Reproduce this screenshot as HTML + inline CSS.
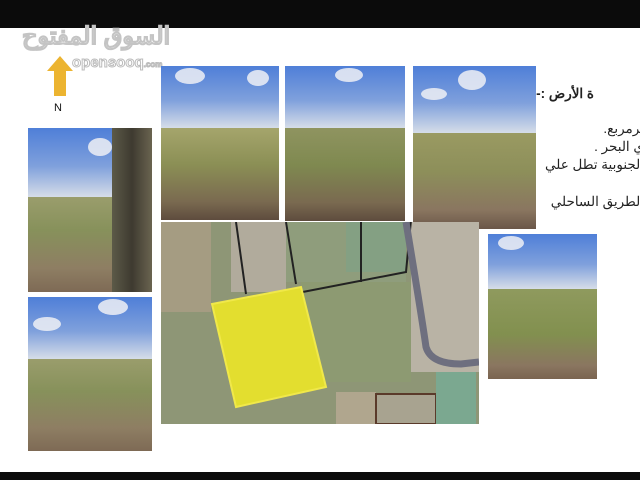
<!DOCTYPE html>
<html><head><meta charset="utf-8"><style>
*{margin:0;padding:0;box-sizing:border-box}
body{width:640px;height:480px;overflow:hidden;background:#fff;position:relative;font-family:"Liberation Sans","Noto Sans CJK SC",sans-serif}
.bar{position:absolute;left:0;width:640px;background:#0b0b0b}
.p{position:absolute;overflow:hidden}
.sky{position:absolute;left:0;right:0;top:0;background:linear-gradient(#4f7fd8,#7fa0dc 55%,#d6dde8)}
.gr{position:absolute;left:0;right:0;bottom:0;background:linear-gradient(#9a9d6c,#87915b 35%,#8e7e63 75%,#7e6a55)}
.cl{position:absolute;background:#eef0f4;border-radius:50%;opacity:.85}
.t{position:absolute;direction:rtl;white-space:nowrap;font-size:13.5px;color:#222;font-family:"Liberation Sans","Noto Sans CJK SC",sans-serif}
</style></head><body>
<div class="bar" style="top:0;height:28px"></div>
<div class="bar" style="top:472px;height:8px"></div>

<div style="position:absolute;left:22px;top:22px;font-size:24px;font-weight:bold;color:#fff;-webkit-text-stroke:1.2px #c4c4c4;direction:rtl;font-family:'Liberation Sans','Noto Sans CJK SC',sans-serif">السوق المفتوح</div>
<div style="position:absolute;left:72px;top:54px;font-size:15px;color:#fff;-webkit-text-stroke:1px #bbb;font-weight:bold">opensooq<span style="font-size:8px">.com</span></div>
<svg style="position:absolute;left:46px;top:55px" width="28" height="42"><polygon points="14,1 27,16 20,16 20,41 8,41 8,16 1,16" fill="#ecb431"/></svg>
<div style="position:absolute;left:54px;top:102px;font-size:11px;color:#111">N</div>

<div class="p" style="left:28px;top:128px;width:124px;height:164px"><div class="sky" style="height:42%"></div><div class="gr" style="height:58%"></div><div class="cl" style="left:60px;top:10px;width:24px;height:18px"></div><div style="position:absolute;left:84px;top:0;width:40px;height:164px;background:linear-gradient(90deg,#5c5a48,#3e3a30,#6a6450)"></div></div>
<div class="p" style="left:28px;top:297px;width:124px;height:154px"><div class="sky" style="height:40%"></div><div class="gr" style="height:60%"></div><div class="cl" style="left:70px;top:2px;width:30px;height:16px"></div><div class="cl" style="left:5px;top:20px;width:28px;height:14px"></div></div>
<div class="p" style="left:161px;top:66px;width:118px;height:154px"><div class="sky" style="height:40%"></div><div class="gr" style="height:60%;background:linear-gradient(#a5a56c,#8b8f55 40%,#7a6a50 80%,#5e4c3e)"></div><div class="cl" style="left:14px;top:2px;width:30px;height:16px"></div><div class="cl" style="left:86px;top:4px;width:22px;height:16px"></div></div>
<div class="p" style="left:285px;top:66px;width:120px;height:155px"><div class="sky" style="height:40%"></div><div class="gr" style="height:60%;background:linear-gradient(#8f9460,#7f8950 40%,#7a6a50 80%,#5e4c3e)"></div><div class="cl" style="left:50px;top:2px;width:28px;height:14px"></div></div>
<div class="p" style="left:413px;top:66px;width:123px;height:163px"><div class="sky" style="height:41%"></div><div class="gr" style="height:59%;background:linear-gradient(#9a9a62,#8d8f5a 40%,#8a7660 80%,#6a5648)"></div><div class="cl" style="left:45px;top:4px;width:28px;height:20px"></div><div class="cl" style="left:8px;top:22px;width:26px;height:12px"></div></div>
<div class="p" style="left:488px;top:234px;width:109px;height:145px"><div class="sky" style="height:38%"></div><div class="gr" style="height:62%;background:linear-gradient(#8f9a5e,#82904f 50%,#8a7660 85%,#7a6450)"></div><div class="cl" style="left:10px;top:2px;width:26px;height:14px"></div></div>

<svg style="position:absolute;left:161px;top:222px" width="318" height="202" viewBox="0 0 318 202">
<rect width="318" height="202" fill="#8e9676"/>
<rect x="0" y="0" width="50" height="90" fill="#a59c82"/>
<rect x="70" y="0" width="55" height="70" fill="#b1ab9c"/>
<rect x="125" y="0" width="120" height="60" fill="#8f9d7c"/>
<rect x="185" y="0" width="60" height="50" fill="#84a083"/>
<rect x="250" y="0" width="68" height="150" fill="#b9b3a5"/>
<rect x="140" y="60" width="110" height="100" fill="#8d9a72"/>
<path d="M200 0 L200 60 M75 0 L85 72 M125 0 L135 62 M250 -2 L245 50 L90 80" stroke="#222" stroke-width="2" fill="none"/>
<path d="M245 0 Q260 90 265 125 Q270 142 300 142 L318 140" stroke="#6e6f7f" stroke-width="7" fill="none"/>
<polygon points="51,82 140,65 165,165 75,185" fill="#e3de2f" stroke="#f0e84a" stroke-width="2"/>
<rect x="175" y="170" width="40" height="32" fill="#b0a68e"/>
<rect x="215" y="172" width="60" height="30" fill="#a8a390" stroke="#5a3a2a" stroke-width="2"/>
<rect x="275" y="150" width="40" height="52" fill="#7ba890"/>
</svg>

<div class="t" style="right:46px;top:86px;font-weight:bold;font-size:13.5px">ة الأرض :-</div>
<div class="t" style="right:-4px;top:121px">ترمربع.</div>
<div class="t" style="right:-4px;top:139px">ي البحر .</div>
<div class="t" style="right:-4px;top:157px">الجنوبية تطل علي</div>
<div class="t" style="right:-4px;top:194px">الطريق الساحلي</div>
</body></html>
